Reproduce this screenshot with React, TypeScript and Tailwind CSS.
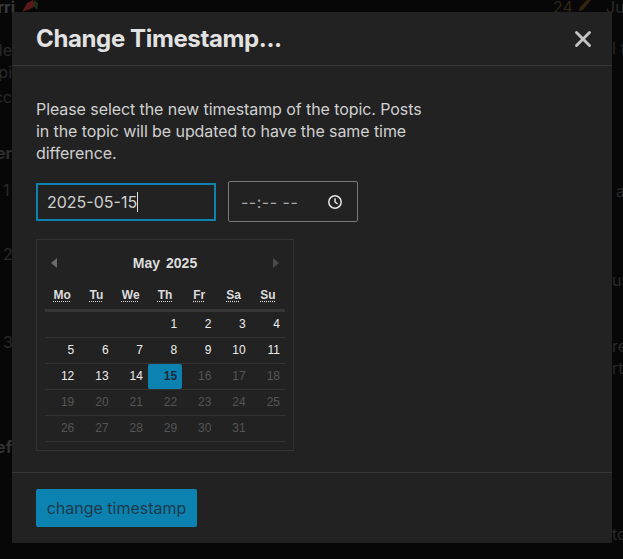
import { X } from "lucide-react";

const weekdays = ["Mo", "Tu", "We", "Th", "Fr", "Sa", "Su"];

// null = empty cell at the start / end of the month
const weeks: (number | null)[][] = [
  [null, null, null, 1, 2, 3, 4],
  [5, 6, 7, 8, 9, 10, 11],
  [12, 13, 14, 15, 16, 17, 18],
  [19, 20, 21, 22, 23, 24, 25],
  [26, 27, 28, 29, 30, 31, null],
];

const SELECTED_DAY = 15;

// bits of the page that stick out around the dialog
const backdropBits = [
  { text: "rri", className: "left-0 top-[-5px] font-bold text-[#3a3a3a] text-[16px] w-[15px] justify-end" },
  { text: "24", className: "left-[553px] top-[-5px] text-[#2e2619] text-[16px]" },
  { text: "Ju", className: "left-[606px] top-[-5px] text-[#2a2a2a] text-[16px]" },
  { text: "ele", className: "left-0 top-[38px] text-[#2a2a2a] text-[16px] w-[12px] justify-end" },
  { text: "opi", className: "left-0 top-[60px] text-[#2a2a2a] text-[16px] w-[12px] justify-end" },
  { text: "occ", className: "left-0 top-[85px] text-[#2a2a2a] text-[16px] w-[12px] justify-end" },
  { text: "ier", className: "left-0 top-[141px] font-bold text-[#2e2e2e] text-[16px] w-[12px] justify-end" },
  { text: "1", className: "left-[3px] top-[178px] text-[#2a2a2a] text-[16px]" },
  { text: "2", className: "left-[3px] top-[242px] text-[#2a2a2a] text-[16px]" },
  { text: "3", className: "left-[3px] top-[330px] text-[#2a2a2a] text-[16px]" },
  { text: "ef", className: "left-0 top-[435px] font-bold text-[#333333] text-[16px] w-[12px] justify-end" },
  { text: "l f", className: "left-[612px] top-[36px] text-[#2a2a2a] text-[16px]" },
  { text: "a", className: "left-[616px] top-[179px] text-[#2a2a2a] text-[16px]" },
  { text: "us", className: "left-[612px] top-[268px] text-[#2a2a2a] text-[16px]" },
  { text: "re", className: "left-[612px] top-[334px] text-[#2a2a2a] text-[16px]" },
  { text: "rti", className: "left-[612px] top-[356px] text-[#2a2a2a] text-[16px]" },
  { text: "to", className: "left-[612px] top-[522px] text-[#2a2a2a] text-[16px]" },
];

function DatePicker() {
  return (
    <div className="w-[258px] h-[212px] border border-[#333333] px-2 pt-2 font-['Liberation_Sans',Arial,sans-serif] text-[12px]">
      <div className="flex items-center justify-between h-[30px] px-[6px]">
        <span className="w-0 h-0 border-y-[5px] border-y-transparent border-r-[6px] border-r-[#6a6a6a]" />
        <div className="flex gap-[6px] text-[14px] leading-none font-bold text-[#dddddd]">
          <span>May</span>
          <span>2025</span>
        </div>
        <span className="w-0 h-0 border-y-[5px] border-y-transparent border-l-[6px] border-l-[#4a4a4a]" />
      </div>

      <table className="w-full table-fixed border-collapse">
        <thead>
          <tr className="h-[32px] border-b-[3px] border-[#363636]">
            {weekdays.map((day) => (
              <th key={day} className="p-0 pt-[4px] text-center font-bold text-[#dddddd]">
                <span className="underline decoration-dotted underline-offset-2">{day}</span>
              </th>
            ))}
          </tr>
        </thead>
        <tbody>
          {weeks.map((week, i) => (
            <tr key={i} className="h-[26px] border-b border-[#333333]">
              {week.map((day, j) => {
                if (day === null) return <td key={j} className="p-0" />;
                const selected = day === SELECTED_DAY;
                const inactive = day > SELECTED_DAY;
                return (
                  <td key={j} className="p-0">
                    <div
                      className={`flex items-center justify-end h-[25px] pr-[5px] pb-px rounded-[2px] ${
                        selected
                          ? "bg-[#0c82b1] text-[#1a2c3a] font-bold"
                          : inactive
                            ? "text-[#555555]"
                            : "text-[#eeeeee]"
                      }`}
                    >
                      {day}
                    </div>
                  </td>
                );
              })}
            </tr>
          ))}
        </tbody>
      </table>
    </div>
  );
}

export default function App() {
  return (
    <div className="relative w-[623px] h-[559px] overflow-hidden bg-[#070707] font-['Inter',sans-serif]">
      {backdropBits.map((bit) => (
        <span key={bit.text + bit.className} className={`absolute flex overflow-hidden whitespace-nowrap ${bit.className}`}>
          {bit.text}
        </span>
      ))}

      {/* chili emoji and pencil peeking out above the dialog */}
      <svg className="absolute left-[21px] top-0" width="18" height="12" viewBox="0 0 18 12">
        <path d="M1 12 6 3 12 0l2 6-5 3Z" fill="#5a1a1a" />
        <path d="M13 0l4 3-1 7-3-4Z" fill="#1d3317" />
      </svg>
      <svg className="absolute left-[577px] top-0" width="17" height="12" viewBox="0 0 17 12" fill="none">
        <path d="M2 11 3 7 10 0h4l-8 10Z" fill="#33230f" />
      </svg>

      {/* Modal */}
      <div className="absolute left-[12px] top-[12px] w-[600px] h-[531px] flex flex-col bg-[#222222] text-[#dddddd]">
        <div className="flex items-center justify-between h-[54px] pl-[24px] pr-[16px] border-b border-[#363636]">
          <h1 className="text-[24px] font-bold tracking-[-0.37px] text-[#e2e2e2]">Change Timestamp...</h1>
          <X size={26} strokeWidth={2.6} className="text-[#c4c4c4]" />
        </div>

        <div className="flex-1 px-[24px] pt-[32px]">
          <p className="w-[400px] text-[16px] leading-[22px] tracking-[-0.08px] text-[#d0d0d0]">
            Please select the new timestamp of the topic. Posts in the topic will be updated to have the same time
            difference.
          </p>

          <div className="flex items-center gap-[12px] mt-[17px]">
            <div className="flex items-center w-[180px] h-[38px] pl-[9px] border-2 border-[#0c82b1] text-[16px] text-[#d0d0d0]">
              2025-05-15
              <span className="w-px h-[20px] bg-[#e0e0e0]" />
            </div>
            <div className="flex items-center justify-between w-[130px] h-[41px] pl-[12px] pr-[14px] border border-[#7a7a7a] rounded-[2px] text-[16px] tracking-[0.5px] text-[#a8a8a8]">
              <span>--:-- --</span>
              <svg width="16" height="16" viewBox="0 0 16 16" fill="none" stroke="#e6e6e6" strokeWidth="1.5">
                <circle cx="8" cy="8" r="6.2" />
                <path d="M8 4.2V8l2.6 2" />
              </svg>
            </div>
          </div>

          <div className="mt-[17px]">
            <DatePicker />
          </div>
        </div>

        <div className="h-[71px] px-[24px] pt-[16px] border-t border-[#363636]">
          <button className="w-[161px] h-[38px] rounded-[2px] bg-[#0c82b1] text-[16px] text-[#1c3a4c]">
            change timestamp
          </button>
        </div>
      </div>
    </div>
  );
}
